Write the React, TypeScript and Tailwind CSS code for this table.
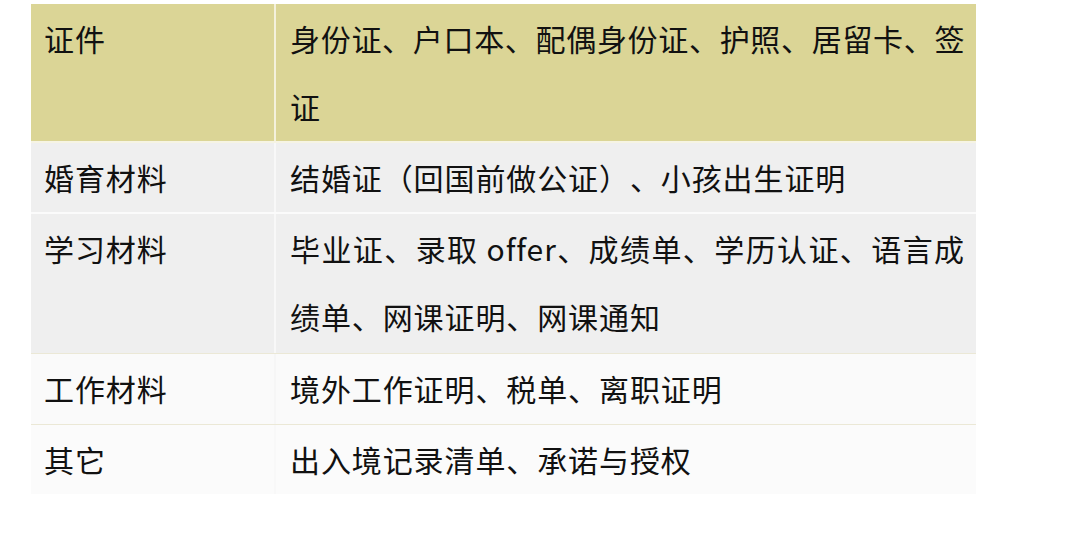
import React from "react";

type Row = { k: string; v: React.ReactNode; bg: string; h: string; border: string; div: string };

const J = ({ children, tight }: { children: React.ReactNode; tight?: boolean }) => (
  <div className={`text-justify [text-align-last:justify] ${tight ? "tracking-[0.5px]" : ""}`}>{children}</div>
);

const rows: Row[] = [
  {
    k: "证件",
    v: (
      <>
        <J tight>身份证、户口本、配偶身份证、护照、居留卡、签</J>
        <div>证</div>
      </>
    ),
    bg: "bg-[#dbd596]",
    h: "h-[137px]",
    border: "border-b-2 border-[#f6f4e4]",
    div: "border-[#f4f1dc]",
  },
  { k: "婚育材料", v: "结婚证（回国前做公证）、小孩出生证明", bg: "bg-[#efefef]", h: "h-[69px]", border: "border-b-2 border-[#fbfbfb]", div: "border-[#f8f8f8]" },
  {
    k: "学习材料",
    v: (
      <>
        <J>毕业证、录取 offer、成绩单、学历认证、语言成</J>
        <div>绩单、网课证明、网课通知</div>
      </>
    ),
    bg: "bg-[#efefef]",
    h: "h-[139px]",
    border: "border-b border-[#ebe8d6]",
    div: "border-[#f8f8f8]",
  },
  { k: "工作材料", v: "境外工作证明、税单、离职证明", bg: "bg-[#fafafa]", h: "h-[70px]", border: "border-b border-[#ebe8d6]", div: "border-[#f6f6f6]" },
  { k: "其它", v: "出入境记录清单、承诺与授权", bg: "bg-[#fbfbfb]", h: "h-[69px]", border: "", div: "border-[#f8f8f8]" },
];

export default function App() {
  return (
    <div
      className="w-[1080px] h-[546px] bg-white pt-[4px] pl-[31px]"
      style={{ fontFamily: '"Noto Sans CJK SC", "Noto Sans", sans-serif' }}
    >
      <div className="w-[945px] flex flex-col text-[30px] leading-[68px] tracking-[0.9px] text-[#111] [text-spacing-trim:space-all]">
        {rows.map((r) => (
          <div key={r.k} className={`flex ${r.bg} ${r.border}`}>
            <div className={`w-[245px] shrink-0 pl-[13px] ${r.h} border-r-2 ${r.div}`}>{r.k}</div>
            <div className={`flex-1 pl-[14px] pr-[11px] whitespace-nowrap ${r.h}`}>{r.v}</div>
          </div>
        ))}
      </div>
    </div>
  );
}
